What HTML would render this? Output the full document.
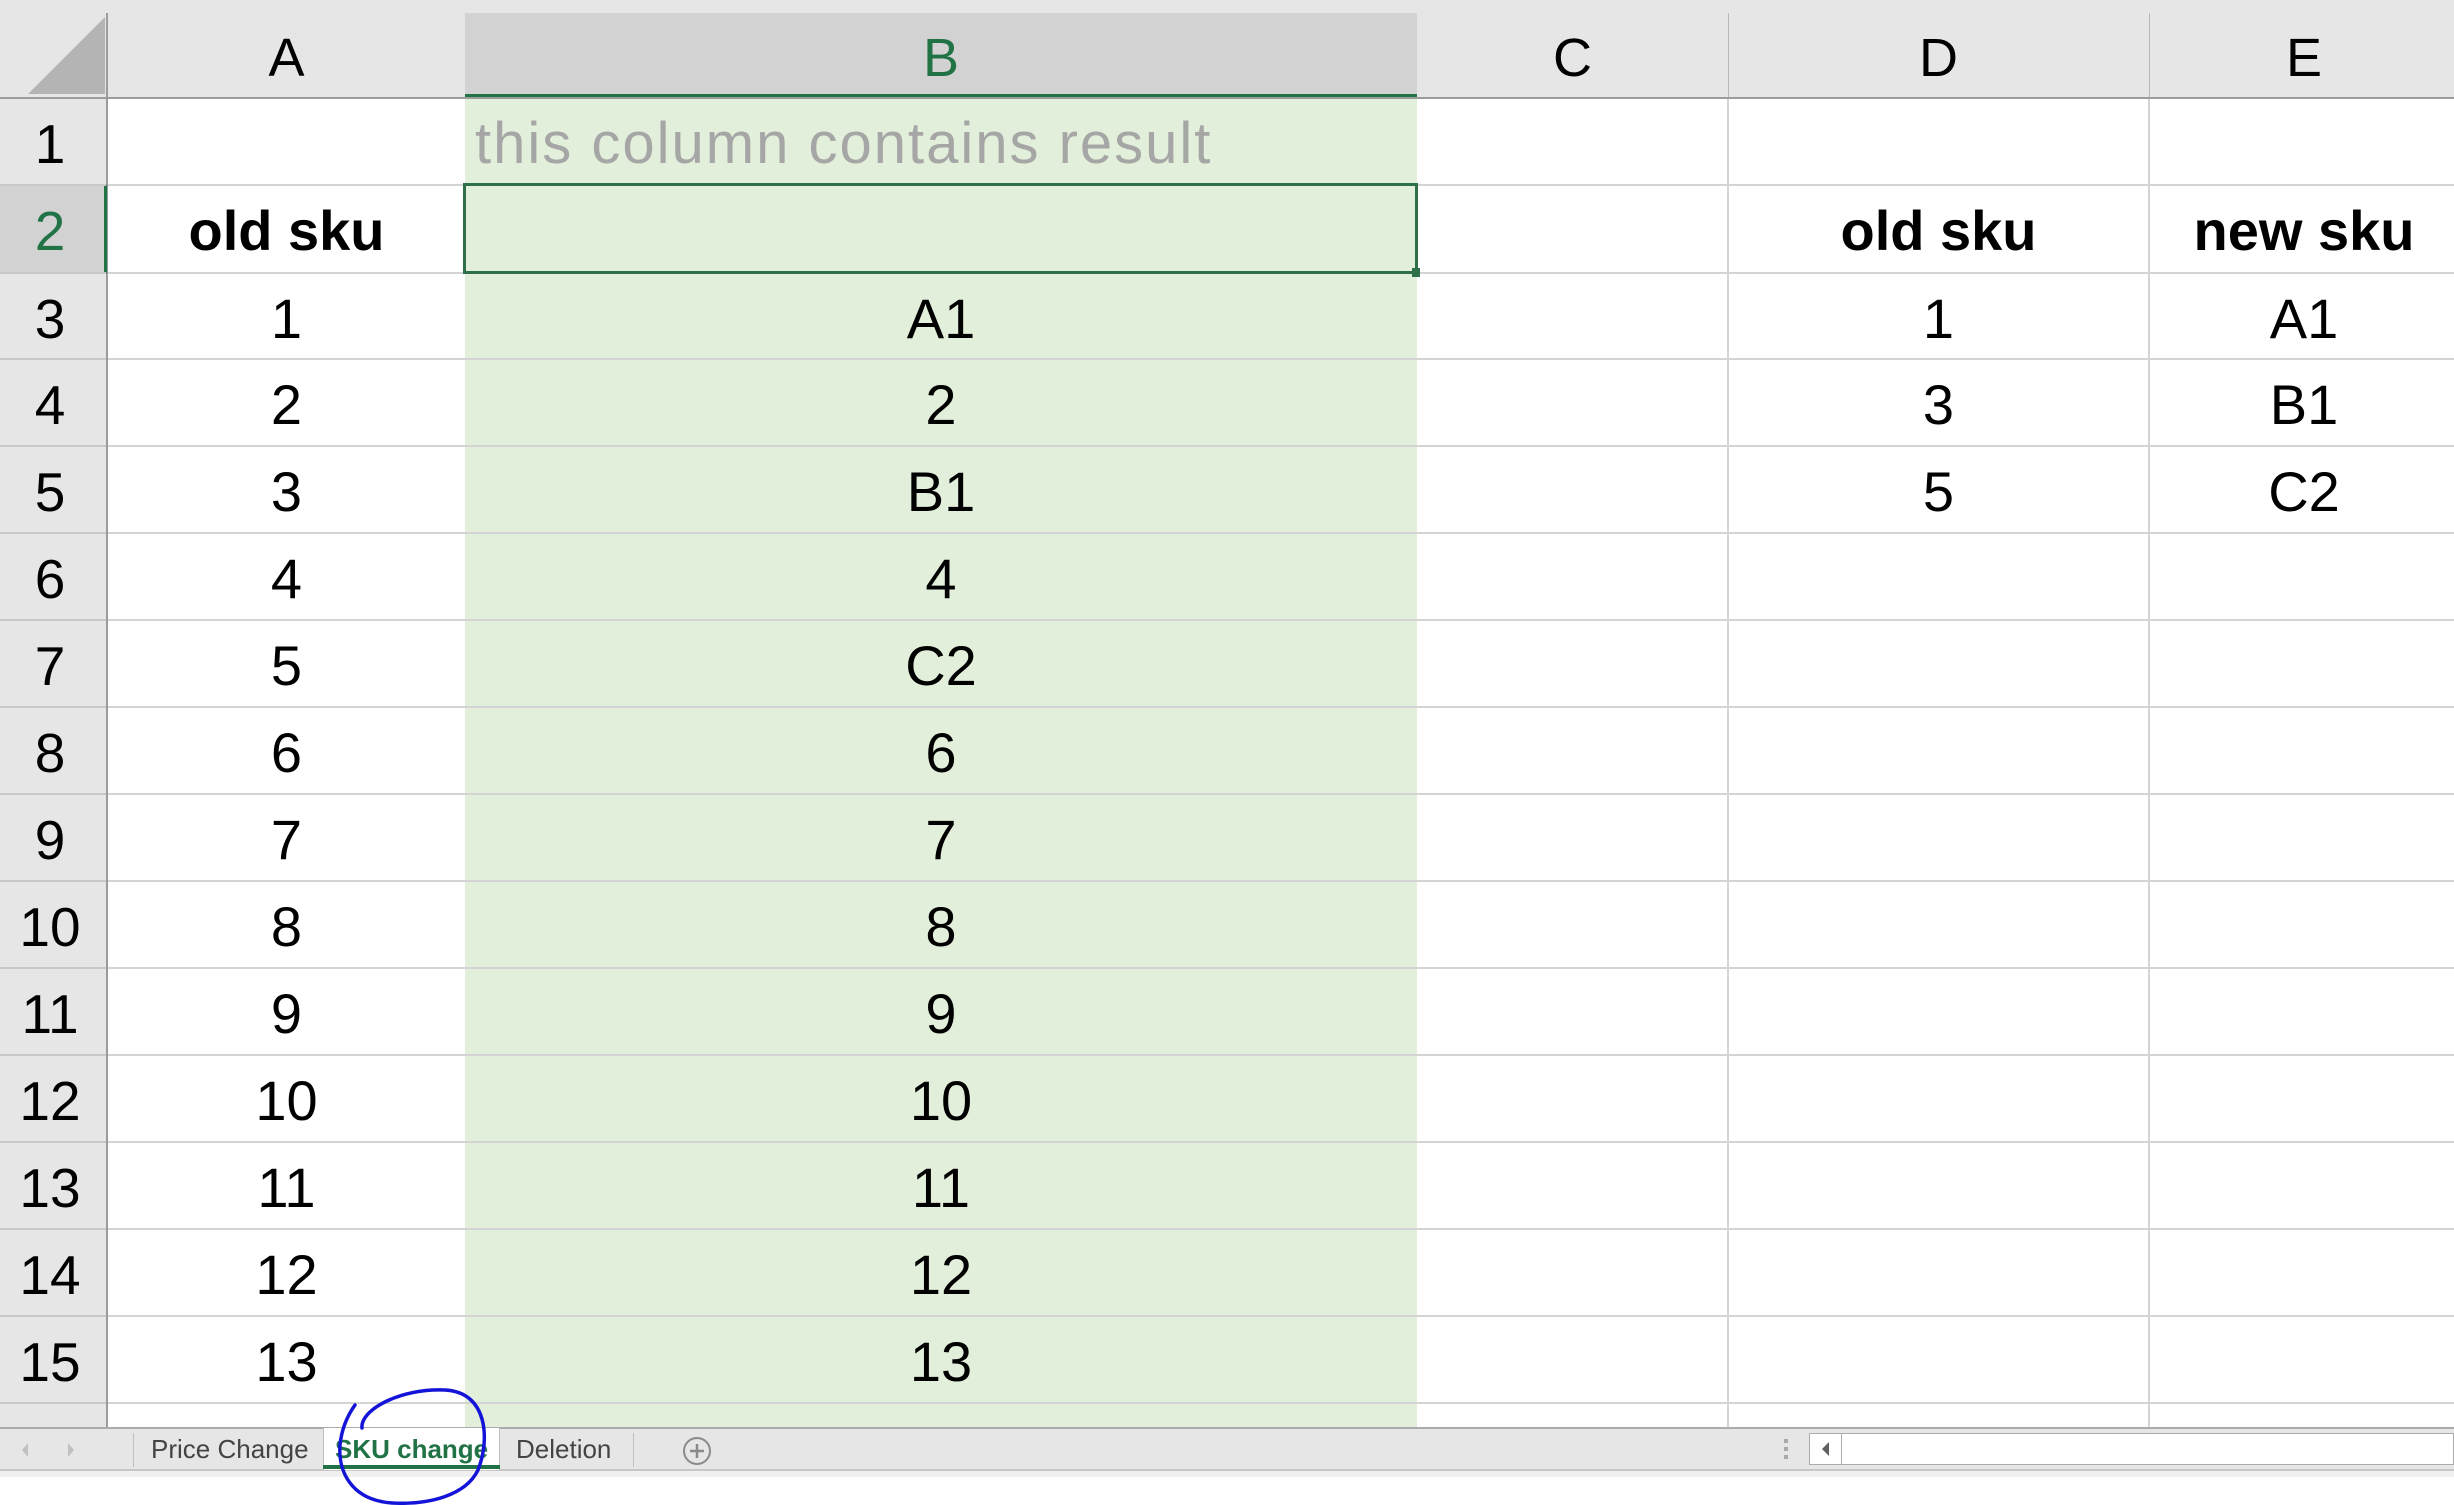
<!DOCTYPE html>
<html><head><meta charset="utf-8"><style>
*{margin:0;padding:0;box-sizing:border-box}
body{width:2454px;height:1505px;background:#fff;position:relative;overflow:hidden;font-family:"Liberation Sans",Arial,sans-serif}
.a{position:absolute}
.t{position:absolute;text-align:center;font-size:56px;color:#000;line-height:92px;height:87px}
.h{position:absolute;text-align:center;font-size:54px;line-height:90px;top:13px;height:85px}
.rh{position:absolute;left:0;width:100px;text-align:center;font-size:55px;line-height:92px;height:87px}
.hl{position:absolute;height:2px;background:#d4d4d4}
.vl{position:absolute;width:2px;background:#d4d4d4}
</style></head><body>
<div class="a" style="left:0;top:0;width:2454px;height:98px;background:#e6e6e6"></div>
<div class="a" style="left:0;top:98px;width:108px;height:1330px;background:#e6e6e6"></div>
<svg class="a" style="left:0;top:0" width="110" height="100"><polygon points="28,94 105,17 105,94" fill="#b4b4b4"/></svg>
<div class="a" style="left:465px;top:13px;width:952px;height:85px;background:#d2d2d2"></div>
<div class="a" style="left:465px;top:94px;width:952px;height:5px;background:#217346"></div>
<div class="a" style="left:1728px;top:13px;width:1px;height:85px;background:#b8b8b8"></div>
<div class="a" style="left:2149px;top:13px;width:1px;height:85px;background:#b8b8b8"></div>
<div class="a" style="left:106px;top:13px;width:2px;height:1415px;background:#9c9c9c"></div>
<div class="a" style="left:0;top:97px;width:2454px;height:2px;background:#9c9c9c"></div>
<div class="a" style="left:0;top:185px;width:106px;height:88px;background:#d2d2d2"></div>
<div class="a" style="left:104px;top:185px;width:3px;height:88px;background:#217346"></div>
<div class="a" style="left:465px;top:99px;width:952px;height:1329px;background:#e2efda"></div>
<div class="hl" style="left:108px;top:184px;width:2346px"></div>
<div class="hl" style="left:108px;top:272px;width:2346px"></div>
<div class="hl" style="left:108px;top:358px;width:2346px"></div>
<div class="hl" style="left:108px;top:445px;width:2346px"></div>
<div class="hl" style="left:108px;top:532px;width:2346px"></div>
<div class="hl" style="left:108px;top:619px;width:2346px"></div>
<div class="hl" style="left:108px;top:706px;width:2346px"></div>
<div class="hl" style="left:108px;top:793px;width:2346px"></div>
<div class="hl" style="left:108px;top:880px;width:2346px"></div>
<div class="hl" style="left:108px;top:967px;width:2346px"></div>
<div class="hl" style="left:108px;top:1054px;width:2346px"></div>
<div class="hl" style="left:108px;top:1141px;width:2346px"></div>
<div class="hl" style="left:108px;top:1228px;width:2346px"></div>
<div class="hl" style="left:108px;top:1315px;width:2346px"></div>
<div class="hl" style="left:108px;top:1402px;width:2346px"></div>
<div class="hl" style="left:0;top:184px;width:106px;background:#c8c8c8"></div>
<div class="hl" style="left:0;top:272px;width:106px;background:#c8c8c8"></div>
<div class="hl" style="left:0;top:358px;width:106px;background:#c8c8c8"></div>
<div class="hl" style="left:0;top:445px;width:106px;background:#c8c8c8"></div>
<div class="hl" style="left:0;top:532px;width:106px;background:#c8c8c8"></div>
<div class="hl" style="left:0;top:619px;width:106px;background:#c8c8c8"></div>
<div class="hl" style="left:0;top:706px;width:106px;background:#c8c8c8"></div>
<div class="hl" style="left:0;top:793px;width:106px;background:#c8c8c8"></div>
<div class="hl" style="left:0;top:880px;width:106px;background:#c8c8c8"></div>
<div class="hl" style="left:0;top:967px;width:106px;background:#c8c8c8"></div>
<div class="hl" style="left:0;top:1054px;width:106px;background:#c8c8c8"></div>
<div class="hl" style="left:0;top:1141px;width:106px;background:#c8c8c8"></div>
<div class="hl" style="left:0;top:1228px;width:106px;background:#c8c8c8"></div>
<div class="hl" style="left:0;top:1315px;width:106px;background:#c8c8c8"></div>
<div class="hl" style="left:0;top:1402px;width:106px;background:#c8c8c8"></div>
<div class="vl" style="left:1727px;top:99px;height:1329px"></div>
<div class="vl" style="left:2148px;top:99px;height:1329px"></div>
<div class="a" style="left:463px;top:183px;width:955px;height:91px;border:3px solid #2e7048"></div>
<div class="a" style="left:1412px;top:268px;width:8px;height:9px;background:#2e7048"></div>
<div class="h" style="left:108px;width:357px">A</div>
<div class="h" style="left:465px;width:952px;color:#217346">B</div>
<div class="h" style="left:1417px;width:311px">C</div>
<div class="h" style="left:1728px;width:421px">D</div>
<div class="h" style="left:2149px;width:310px">E</div>
<div class="rh" style="top:98px">1</div>
<div class="rh" style="top:185px;color:#217346">2</div>
<div class="rh" style="top:273px">3</div>
<div class="rh" style="top:359px">4</div>
<div class="rh" style="top:446px">5</div>
<div class="rh" style="top:533px">6</div>
<div class="rh" style="top:620px">7</div>
<div class="rh" style="top:707px">8</div>
<div class="rh" style="top:794px">9</div>
<div class="rh" style="top:881px">10</div>
<div class="rh" style="top:968px">11</div>
<div class="rh" style="top:1055px">12</div>
<div class="rh" style="top:1142px">13</div>
<div class="rh" style="top:1229px">14</div>
<div class="rh" style="top:1316px">15</div>
<div class="rh" style="top:1403px">16</div>
<div class="t" style="left:475px;top:98px;text-align:left;color:#a6a6a6;font-size:58px;letter-spacing:2px">this column contains result</div>
<div class="t" style="left:108px;width:357px;top:185px;font-weight:bold">old sku</div>
<div class="t" style="left:108px;width:357px;top:273px">1</div>
<div class="t" style="left:108px;width:357px;top:359px">2</div>
<div class="t" style="left:108px;width:357px;top:446px">3</div>
<div class="t" style="left:108px;width:357px;top:533px">4</div>
<div class="t" style="left:108px;width:357px;top:620px">5</div>
<div class="t" style="left:108px;width:357px;top:707px">6</div>
<div class="t" style="left:108px;width:357px;top:794px">7</div>
<div class="t" style="left:108px;width:357px;top:881px">8</div>
<div class="t" style="left:108px;width:357px;top:968px">9</div>
<div class="t" style="left:108px;width:357px;top:1055px">10</div>
<div class="t" style="left:108px;width:357px;top:1142px">11</div>
<div class="t" style="left:108px;width:357px;top:1229px">12</div>
<div class="t" style="left:108px;width:357px;top:1316px">13</div>
<div class="t" style="left:465px;width:952px;top:273px">A1</div>
<div class="t" style="left:465px;width:952px;top:359px">2</div>
<div class="t" style="left:465px;width:952px;top:446px">B1</div>
<div class="t" style="left:465px;width:952px;top:533px">4</div>
<div class="t" style="left:465px;width:952px;top:620px">C2</div>
<div class="t" style="left:465px;width:952px;top:707px">6</div>
<div class="t" style="left:465px;width:952px;top:794px">7</div>
<div class="t" style="left:465px;width:952px;top:881px">8</div>
<div class="t" style="left:465px;width:952px;top:968px">9</div>
<div class="t" style="left:465px;width:952px;top:1055px">10</div>
<div class="t" style="left:465px;width:952px;top:1142px">11</div>
<div class="t" style="left:465px;width:952px;top:1229px">12</div>
<div class="t" style="left:465px;width:952px;top:1316px">13</div>
<div class="t" style="left:1728px;width:421px;top:185px;font-weight:bold">old sku</div>
<div class="t" style="left:2149px;width:310px;top:185px;font-weight:bold">new sku</div>
<div class="t" style="left:1728px;width:421px;top:273px">1</div>
<div class="t" style="left:1728px;width:421px;top:359px">3</div>
<div class="t" style="left:1728px;width:421px;top:446px">5</div>
<div class="t" style="left:2149px;width:310px;top:273px">A1</div>
<div class="t" style="left:2149px;width:310px;top:359px">B1</div>
<div class="t" style="left:2149px;width:310px;top:446px">C2</div>
<div class="a" style="left:0;top:1427px;width:2454px;height:44px;background:#e6e6e6;border-top:2px solid #ababab;border-bottom:2px solid #c6c6c6"></div>
<div class="a" style="left:0;top:1471px;width:2454px;height:6px;background:#f0f0f0"></div>
<svg class="a" style="left:14px;top:1438px" width="70" height="24"><polygon points="14,5 8,12 14,19" fill="#c0c0c0"/><polygon points="54,5 60,12 54,19" fill="#c0c0c0"/></svg>
<div class="a" style="left:133px;top:1433px;width:1px;height:34px;background:#c0c0c0"></div>
<div class="a" style="left:323px;top:1428px;width:177px;height:42px;background:#fff;border-left:1px solid #c0c0c0;border-right:1px solid #c0c0c0"></div>
<div class="a" style="left:323px;top:1465px;width:177px;height:4px;background:#217346"></div>
<div class="a" style="left:151px;top:1428px;font-size:26px;line-height:42px;color:#444">Price Change</div>
<div class="a" style="left:335px;top:1428px;font-size:26px;line-height:42px;color:#217346;font-weight:bold">SKU change</div>
<div class="a" style="left:516px;top:1428px;font-size:26px;line-height:42px;color:#444">Deletion</div>
<div class="a" style="left:633px;top:1433px;width:1px;height:34px;background:#c0c0c0"></div>
<svg class="a" style="left:681px;top:1435px" width="32" height="32"><circle cx="16" cy="16" r="13" fill="none" stroke="#8a8a8a" stroke-width="2"/><path d="M16 9v14M9 16h14" stroke="#8a8a8a" stroke-width="2.5"/></svg>
<div class="a" style="left:1784px;top:1439px;width:4px;height:4px;background:#aaa"></div>
<div class="a" style="left:1784px;top:1447px;width:4px;height:4px;background:#aaa"></div>
<div class="a" style="left:1784px;top:1455px;width:4px;height:4px;background:#aaa"></div>
<div class="a" style="left:1809px;top:1433px;width:645px;height:32px;background:#fff;border:1px solid #ababab"></div>
<div class="a" style="left:1841px;top:1433px;width:1px;height:32px;background:#ababab"></div>
<svg class="a" style="left:1815px;top:1438px" width="20" height="22"><polygon points="14,4 7,11 14,18" fill="#606060"/></svg>
<svg class="a" style="left:0;top:0" width="2454" height="1505"><path d="M362 1428 C 360 1410, 400 1388, 445 1390 C 488 1392, 490 1440, 478 1470 C 466 1495, 430 1505, 392 1503 C 350 1500, 338 1470, 340 1445 C 342 1425, 350 1412, 355 1405" fill="none" stroke="#1414d8" stroke-width="3.5" stroke-linecap="round"/></svg>
</body></html>
